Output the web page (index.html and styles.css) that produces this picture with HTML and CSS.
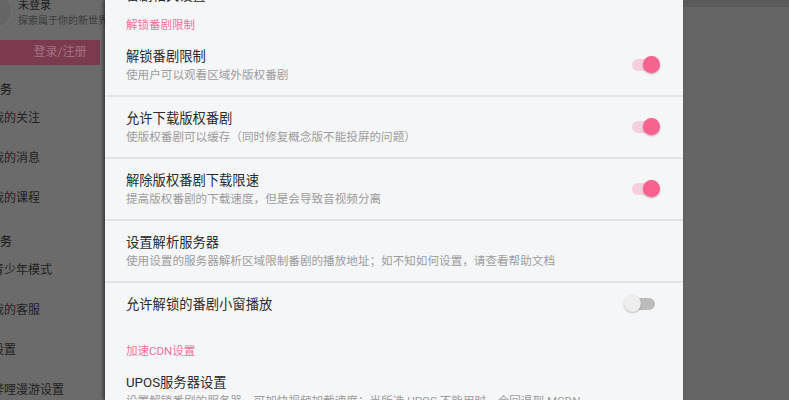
FILE: index.html
```html
<!DOCTYPE html>
<html lang="zh-CN">
<head>
    <meta charset="UTF-8">
    <meta name="viewport" content="width=device-width, initial-scale=1.0">
    <title>番剧设置</title>
    <link rel="stylesheet" href="styles.css">
</head>
<body>
    <div class="screen">
        <!-- side drawer, dimmed behind the dialog -->
        <aside class="drawer">
            <div class="profile">
                <span class="avatar"></span>
                <div class="who">
                    <div class="name">未登录</div>
                    <div class="slogan">探索属于你的新世界</div>
                </div>
            </div>
            <div class="login">登录/注册</div>
            <div class="menu-head">服务</div>
            <div class="menu-item">我的关注</div>
            <div class="menu-item">我的消息</div>
            <div class="menu-item">我的课程</div>
            <div class="menu-head">服务</div>
            <div class="menu-item">青少年模式</div>
            <div class="menu-item">我的客服</div>
            <div class="menu-item">设置</div>
            <div class="menu-item">哔哩漫游设置</div>
        </aside>

        <!-- settings dialog -->
        <main class="panel">
            <div class="cut">番剧相关设置</div>

            <div class="cat">解锁番剧限制</div>
            <div class="row">
                <div class="text">
                    <div class="title">解锁番剧限制</div>
                    <div class="sub">使用户可以观看区域外版权番剧</div>
                </div>
                <span class="switch on"></span>
            </div>
            <div class="row">
                <div class="text">
                    <div class="title">允许下载版权番剧</div>
                    <div class="sub">使版权番剧可以缓存（同时修复概念版不能投屏的问题）</div>
                </div>
                <span class="switch on"></span>
            </div>
            <div class="row">
                <div class="text">
                    <div class="title">解除版权番剧下载限速</div>
                    <div class="sub">提高版权番剧的下载速度，但是会导致音视频分离</div>
                </div>
                <span class="switch on"></span>
            </div>
            <div class="row">
                <div class="text">
                    <div class="title">设置解析服务器</div>
                    <div class="sub">使用设置的服务器解析区域限制番剧的播放地址；如不知如何设置，请查看帮助文档</div>
                </div>
            </div>
            <div class="row last">
                <div class="text">
                    <div class="title">允许解锁的番剧小窗播放</div>
                </div>
                <span class="switch"></span>
            </div>

            <div class="cat">加速CDN设置</div>
            <div class="row">
                <div class="text">
                    <div class="title">UPOS服务器设置</div>
                    <div class="sub">设置解锁番剧的服务器，可加快视频加载速度；当所选 UPOS 不能用时，会回退到 MCDN</div>
                </div>
            </div>
        </main>

        <div class="scrim">
            <div class="scrim-bar"></div>
        </div>
    </div>
</body>
</html>
```

FILE: styles.css
```css
body {
    margin: 0;
    font-family: Roboto, "Noto Sans CJK SC", sans-serif;
    background-color: #646464;
}
.screen {
    display: flex;
    height: 400px;
    overflow: hidden;
}

/* drawer */
.drawer {
    width: 105px;
    flex-shrink: 0;
    background: #6b6b6b;
    overflow: hidden;
    white-space: nowrap;
    color: #1f1f1f;
}
.profile {
    display: flex;
    align-items: flex-start;
    height: 40px;
}
.avatar {
    width: 32px;
    height: 32px;
    margin: -6px 6px 0 -22px;
    border-radius: 50%;
    background: #656565;
    border: 1px solid #747474;
    flex-shrink: 0;
}
.who {
    margin-top: -2px;
}
.name {
    font-size: 11px;
    line-height: 16px;
    color: #1c1c1c;
}
.slogan {
    font-size: 10px;
    line-height: 14px;
    color: #3a3a3a;
}
.login {
    width: 80px;
    height: 25px;
    padding-left: 20px;
    margin-bottom: 1px;
    background: #7b3a4d;
    color: #a67384;
    font-size: 12px;
    line-height: 25px;
    text-align: center;
}
.menu-head {
    height: 16px;
    padding-top: 16px;
    margin-left: -12px;
    font-size: 12px;
    line-height: 16px;
    font-weight: 500;
}
.menu-item {
    height: 40px;
    margin-left: -8px;
    font-size: 12px;
    line-height: 40px;
}

/* dialog */
.panel {
    width: 578px;
    flex-shrink: 0;
    background: #f5f6f8;
    box-shadow: -2px 0 3px rgba(0, 0, 0, 0.45);
    position: relative;
    z-index: 1;
    white-space: nowrap;
    overflow: hidden;
}
.cut {
    margin: -13px 0 -5px;
    padding-left: 21px;
    font-size: 13.3px;
    line-height: 18px;
    color: #2b2b2b;
}
.cat {
    padding: 16px 21px 1px;
    font-size: 11.5px;
    line-height: 18px;
    color: #f0729c;
}
.row {
    display: flex;
    align-items: center;
    padding: 13px 23px 11px 21px;
    border-bottom: 2px solid #e2e3e6;
}
.row.last {
    padding-bottom: 12px;
    border-bottom: none;
}
.text {
    flex: 1;
    min-width: 0;
}
.title {
    font-size: 13.3px;
    line-height: 18px;
    color: #2b2b2b;
}
.sub {
    font-size: 11.6px;
    line-height: 18px;
    color: #9c9c9c;
}

/* switches */
.switch {
    position: relative;
    width: 36px;
    height: 18px;
    margin-top: -2px;
    flex-shrink: 0;
}
.switch::before {
    content: "";
    position: absolute;
    left: 8px;
    top: 3px;
    width: 23px;
    height: 12px;
    border-radius: 6px;
    background: #bcbcbc;
}
.switch::after {
    content: "";
    position: absolute;
    left: 0;
    top: 0;
    width: 17px;
    height: 17px;
    border-radius: 50%;
    background: #ededed;
    box-shadow: 0 1px 2px rgba(0, 0, 0, 0.25);
}
.switch.on::before {
    background: #f5d0dc;
}
.switch.on::after {
    left: auto;
    right: 0;
    background: #f7628f;
    box-shadow: 0 1px 2px rgba(120, 20, 50, 0.4);
}

/* dimmed area right of the dialog */
.scrim {
    flex: 1;
    background: #646464;
}
.scrim-bar {
    height: 7px;
    background: #5a5a5a;
}
```
